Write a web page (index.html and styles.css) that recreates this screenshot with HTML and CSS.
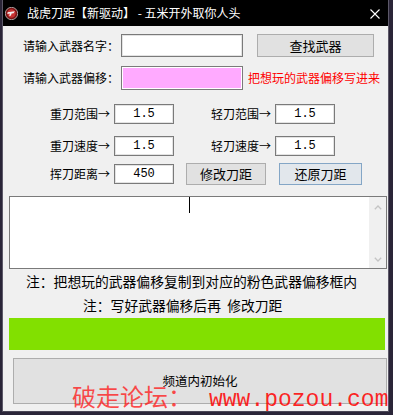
FILE: index.html
```html
<!DOCTYPE html>
<html lang="zh-CN">
<head>
<meta charset="utf-8">
<title>战虎刀距</title>
<link rel="stylesheet" href="styles.css">
</head>
<body>
<div class="window">
  <div class="titlebar">
    <svg class="app-icon" width="13" height="13" viewBox="0 0 13 13">
      <circle cx="6.5" cy="6.5" r="6.2" fill="#7a1414" stroke="#bdbdbd" stroke-width="0.8"/>
      <circle cx="6.5" cy="6.5" r="4.2" fill="#c83232"/>
      <path d="M2.6 5.2 L9.8 4.2 L8.6 6.2 L6.6 6.4 L6 8.6 L4.2 9.2 L4.8 6.6 L2.4 6.9 Z" fill="#f2f2f2"/>
    </svg>
    <span class="title">战虎刀距【新驱动】 - 五米开外取你人头</span>
    <svg class="close" width="10" height="10" viewBox="0 0 10 10">
      <path d="M0.5 0.5 L9.5 9.5 M9.5 0.5 L0.5 9.5" stroke="#ffffff" stroke-width="1.1"/>
    </svg>
  </div>

  <div class="client">
    <div class="row row-name">
      <span class="label">请输入武器名字：</span>
      <div class="edit edit-wide"></div>
      <div class="btn btn-find">查找武器</div>
    </div>

    <div class="row row-offset">
      <span class="label">请输入武器偏移：</span>
      <div class="edit edit-wide edit-pink"></div>
      <span class="hint">把想玩的武器偏移写进来</span>
    </div>

    <div class="param-row row-range">
      <span class="plabel plabel-left">重刀范围→</span>
      <div class="edit edit-num">1.5</div>
      <span class="plabel plabel-right">轻刀范围→</span>
      <div class="edit edit-num">1.5</div>
    </div>

    <div class="param-row row-speed">
      <span class="plabel plabel-left">重刀速度→</span>
      <div class="edit edit-num">1.5</div>
      <span class="plabel plabel-right">轻刀速度→</span>
      <div class="edit edit-num">1.5</div>
    </div>

    <div class="param-row row-dist">
      <span class="plabel plabel-left">挥刀距离→</span>
      <div class="edit edit-num">450</div>
      <div class="btn btn-modify">修改刀距</div>
      <div class="btn btn-restore">还原刀距</div>
    </div>

    <div class="memo">
      <div class="memo-text"><span class="caret"></span></div>
      <div class="memo-scroll">
        <svg width="8" height="5" viewBox="0 0 8 5"><path d="M0.8 4.2 L4 1 L7.2 4.2" fill="none" stroke="#c4c4c4" stroke-width="1.3"/></svg>
        <svg width="8" height="5" viewBox="0 0 8 5"><path d="M0.8 0.8 L4 4 L7.2 0.8" fill="none" stroke="#c4c4c4" stroke-width="1.3"/></svg>
      </div>
    </div>

    <div class="note note-1">注：把想玩的武器偏移复制到对应的粉色武器偏移框内</div>
    <div class="note note-2">注：写好武器偏移后再  修改刀距</div>

    <div class="progress"></div>

    <div class="btn btn-init">频道内初始化</div>

    <div class="watermark"><span class="wm-cjk">破走论坛：</span><span class="wm-latin">www.pozou.com</span></div>
  </div>
</div>
</body>
</html>
```

FILE: styles.css
```css
html, body {
  margin: 0;
  padding: 0;
}

body {
  width: 393px;
  height: 415px;
  overflow: hidden;
  background: #2a2538;
  font-family: "Noto Sans CJK SC", "Noto Sans", sans-serif;
  font-size: 12px;
  color: #000;
}

.window {
  margin-left: 2px;
  width: 385px;
  border-left: 1px solid #5c5868;
  border-right: 1px solid #5c5868;
  border-bottom: 1px solid #4a4656;
}

.titlebar {
  height: 26px;
  background: #000;
  display: flex;
  align-items: center;
  padding-left: 2px;
  padding-right: 8px;
}

.app-icon {
  flex: none;
}

.title {
  margin-left: 9px;
  color: #fff;
  font-size: 12px;
  line-height: 14px;
  white-space: pre;
  flex: 1;
}

.close {
  flex: none;
  margin-top: 1px;
}

.client {
  position: relative;
  background: #f0f0f0;
  height: 385px;
  display: flex;
  flex-direction: column;
  overflow: hidden;
}

.row {
  display: flex;
  align-items: center;
  padding-left: 20px;
}

.row-name {
  margin-top: 7px;
  height: 25px;
}

.row-offset {
  margin-top: 7px;
  height: 26px;
}

.label {
  width: 98px;
  white-space: nowrap;
  line-height: 14px;
}

.edit {
  box-sizing: border-box;
  background: #fff;
  border: 1px solid #7a7a7a;
  box-shadow: inset 0 0 0 1px #e3e3e3;
}

.edit-wide {
  width: 122px;
  height: 24px;
}

.row-name .edit-wide {
  height: 23px;
}

.edit-pink {
  background: #ffaaff;
  box-shadow: inset 0 0 0 1px #ffffff;
}

.btn {
  box-sizing: border-box;
  background: #e1e1e1;
  border: 1px solid #adadad;
  display: flex;
  align-items: center;
  justify-content: center;
  white-space: nowrap;
  line-height: 14px;
}

.btn-find {
  margin-left: 14px;
  width: 117px;
  height: 23px;
  font-size: 13px;
}

.hint {
  margin-left: 5px;
  color: #ff0000;
  white-space: nowrap;
  line-height: 14px;
}

.param-row {
  display: flex;
  align-items: center;
}

.row-range {
  margin-top: 13px;
  height: 20px;
}

.row-speed {
  margin-top: 12px;
  height: 20px;
}

.row-dist {
  margin-top: 7px;
  height: 22px;
}

.plabel {
  text-align: right;
  white-space: nowrap;
  line-height: 14px;
  margin-right: 4px;
}

.plabel-left {
  width: 107px;
}

.plabel-right {
  width: 97px;
}

.edit-num {
  width: 60px;
  height: 20px;
  display: flex;
  align-items: center;
  justify-content: center;
  font-family: "Liberation Mono", "DejaVu Sans Mono", monospace;
  font-size: 12px;
  line-height: 12px;
}

.btn-modify {
  margin-left: 12px;
  width: 80px;
  height: 22px;
  font-size: 13px;
}

.btn-restore {
  margin-left: 13px;
  width: 83px;
  height: 22px;
  font-size: 13px;
  background: #e2e7ec;
  border-color: #84a6c6;
}

.memo {
  margin-top: 11px;
  margin-left: 6px;
  width: 378px;
  height: 73px;
  box-sizing: border-box;
  border: 1px solid #7a7a7a;
  background: #fff;
  display: flex;
}

.memo-text {
  flex: 1;
  display: flex;
  align-items: flex-start;
}

.caret {
  display: block;
  width: 1px;
  height: 16px;
  margin-left: 179px;
  background: #000;
}

.memo-scroll {
  width: 17px;
  background: #f0f0f0;
  display: flex;
  flex-direction: column;
  justify-content: space-between;
  align-items: center;
  padding: 8px 0 6px;
}

.note {
  font-size: 13.8px;
  line-height: 17px;
  white-space: pre;
}

.note-1 {
  margin-top: 4px;
  padding-left: 23px;
}

.note-2 {
  margin-top: 7px;
  padding-left: 80px;
}

.progress {
  margin-top: 4px;
  margin-left: 6px;
  width: 376px;
  height: 32px;
  background: #82e000;
}

.btn-init {
  margin-top: 8px;
  margin-left: 10px;
  width: 374px;
  height: 46px;
  font-size: 12.5px;
}

.watermark {
  position: absolute;
  left: 69px;
  top: 356px;
  display: flex;
  align-items: baseline;
  color: rgba(255, 0, 0, 0.85);
  white-space: nowrap;
  pointer-events: none;
}

.wm-cjk {
  font-family: "Noto Sans CJK SC", sans-serif;
  font-size: 24px;
  line-height: 28px;
  font-weight: 400;
  color: rgba(255, 20, 20, 0.75);
}

.wm-latin {
  margin-left: 17px;
  font-family: "Liberation Mono", "DejaVu Sans Mono", monospace;
  font-size: 23px;
  line-height: 28px;
}
```
